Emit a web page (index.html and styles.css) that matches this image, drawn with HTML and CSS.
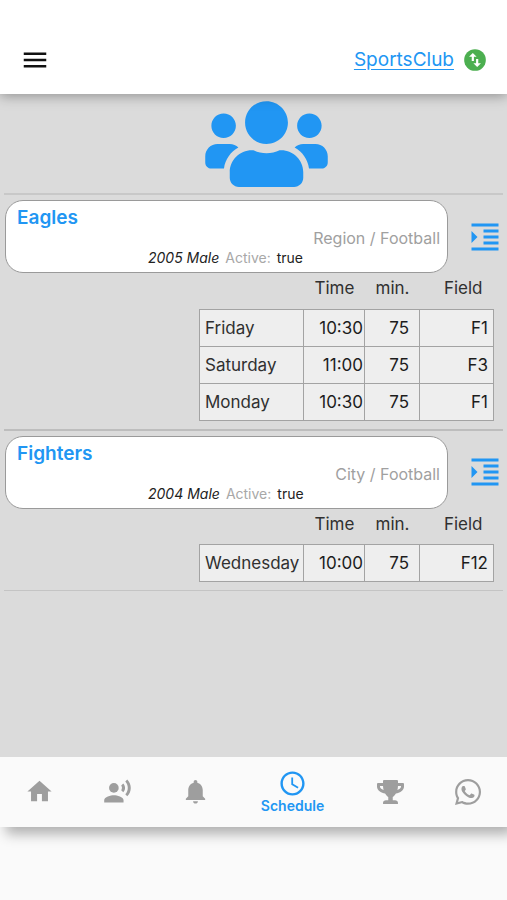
FILE: index.html
```html
<!DOCTYPE html>
<html lang="en">
<head>
<meta charset="utf-8">
<meta name="viewport" content="width=device-width, initial-scale=1">
<title>SportsClub</title>
<link rel="stylesheet" href="styles.css">
</head>
<body>
<div class="app">
  <header class="topbar">
    <button class="icon-button" type="button" aria-label="Menu">
      <svg class="icon-menu" viewBox="0 0 24 24"><path d="M3 18h18v-2H3v2zm0-5h18v-2H3v2zm0-7v2h18V6H3z"/></svg>
    </button>
    <div class="club">
      <a class="club-link" href="#">SportsClub</a>
      <button class="icon-button" type="button" aria-label="Switch club">
        <svg class="icon-swap" viewBox="0 0 24 24"><circle cx="12" cy="12" r="10"/><path d="M6.500 9L10 5.500 13.500 9H11v4H9V9zm11 6L14 18.500 10.500 15H13v-4h2v4z"/></svg>
      </button>
    </div>
  </header>

  <main class="content">
    <div class="hero">
      <svg class="icon-users" viewBox="0 0 640 512" aria-hidden="true"><path d="M96 224c35.300 0 64-28.700 64-64s-28.700-64-64-64-64 28.700-64 64 28.700 64 64 64zm448 0c35.300 0 64-28.700 64-64s-28.700-64-64-64-64 28.700-64 64 28.700 64 64 64zm32 32h-64c-17.600 0-33.500 7.100-45.100 18.600 40.300 22.100 68.900 62 75.100 109.400h66c17.700 0 32-14.300 32-32v-32c0-35.300-28.700-64-64-64zm-256 0c61.900 0 112-50.100 112-112S381.900 32 320 32 208 82.100 208 144s50.100 112 112 112zm76.800 32h-8.300c-20.800 10-43.900 16-68.500 16s-47.600-6-68.500-16h-8.300C179.600 288 128 339.600 128 403.200V432c0 26.500 21.500 48 48 48h288c26.500 0 48-21.500 48-48v-28.800c0-63.600-51.600-115.200-115.200-115.200zm-223.700-13.400C161.500 263.100 145.600 256 128 256H64c-35.300 0-64 28.700-64 64v32c0 17.700 14.300 32 32 32h65.900c6.300-47.400 34.900-87.300 75.200-109.400z"/></svg>
    </div>

    <section class="team">
      <div class="team-row">
        <article class="card">
          <h2 class="team-name">Eagles</h2>
          <p class="team-league">Region / Football</p>
          <p class="team-info"><em>2005 Male</em> <span class="muted">Active:</span> <span>true</span></p>
        </article>
        <button class="icon-button" type="button" aria-label="Toggle Eagles schedule">
          <svg class="icon-indent" viewBox="0 0 24 24"><path d="M3 21h18v-2H3v2zM3 8v8l4-4-4-4zm8 9h10v-2H11v2zM3 3v2h18V3H3zm8 6h10V7H11v2zm0 4h10v-2H11v2z"/></svg>
        </button>
      </div>
      <table class="schedule">
        <thead><tr><td class="day"></td><th class="time">Time</th><th class="min">min.</th><th class="field">Field</th></tr></thead>
        <tbody>
          <tr><td class="day">Friday</td><td class="time">10:30</td><td class="min">75</td><td class="field">F1</td></tr>
          <tr><td class="day">Saturday</td><td class="time">11:00</td><td class="min">75</td><td class="field">F3</td></tr>
          <tr><td class="day">Monday</td><td class="time">10:30</td><td class="min">75</td><td class="field">F1</td></tr>
        </tbody>
      </table>
    </section>

    <section class="team">
      <div class="team-row">
        <article class="card">
          <h2 class="team-name">Fighters</h2>
          <p class="team-league">City / Football</p>
          <p class="team-info"><em>2004 Male</em> <span class="muted">Active:</span> <span>true</span></p>
        </article>
        <button class="icon-button" type="button" aria-label="Toggle Fighters schedule">
          <svg class="icon-indent" viewBox="0 0 24 24"><path d="M3 21h18v-2H3v2zM3 8v8l4-4-4-4zm8 9h10v-2H11v2zM3 3v2h18V3H3zm8 6h10V7H11v2zm0 4h10v-2H11v2z"/></svg>
        </button>
      </div>
      <table class="schedule">
        <thead><tr><td class="day"></td><th class="time">Time</th><th class="min">min.</th><th class="field">Field</th></tr></thead>
        <tbody>
          <tr><td class="day">Wednesday</td><td class="time">10:00</td><td class="min">75</td><td class="field">F12</td></tr>
        </tbody>
      </table>
    </section>
  </main>

  <nav class="tabs">
    <a class="tab" href="#" aria-label="Home"><svg viewBox="0 0 24 24"><path d="M10 20v-6h4v6h5v-8h3L12 3 2 12h3v8z"/></svg></a>
    <a class="tab" href="#" aria-label="News"><svg viewBox="0 0 24 24"><circle cx="9" cy="9" r="4"/><path d="M9 15c-2.670 0-8 1.340-8 4v2h16v-2c0-2.660-5.330-4-8-4zm7.760-9.640l-1.680 1.690c.84 1.180.84 2.710 0 3.890l1.680 1.690c2.020-2.020 2.020-5.070 0-7.270zM20.070 2l-1.630 1.630c2.770 3.020 2.770 7.560 0 10.740L20.070 16c3.900-3.890 3.910-9.950 0-14z"/></svg></a>
    <a class="tab" href="#" aria-label="Notifications"><svg viewBox="0 0 24 24"><path d="M12 22c1.100 0 2-.9 2-2h-4c0 1.100.89 2 2 2zm6-6v-5c0-3.070-1.640-5.640-4.500-6.320V4c0-.83-.67-1.500-1.500-1.500s-1.500.67-1.500 1.500v.68C7.630 5.360 6 7.920 6 11v5l-2 2v1h16v-1l-2-2z"/></svg></a>
    <a class="tab tab-active" href="#" aria-current="page"><svg viewBox="0 0 24 24"><path d="M11.990 2C6.470 2 2 6.480 2 12s4.470 10 9.990 10C17.520 22 22 17.520 22 12S17.520 2 11.990 2zM12 20c-4.420 0-8-3.580-8-8s3.580-8 8-8 8 3.580 8 8-3.580 8-8 8zm.5-13H11v6l5.250 3.150.75-1.230-4.500-2.670z"/></svg><span>Schedule</span></a>
    <a class="tab" href="#" aria-label="Trophies"><svg class="icon-trophy" viewBox="0 0 576 512"><path d="M552 64H448V24c0-13.300-10.700-24-24-24H152c-13.300 0-24 10.700-24 24v40H24C10.700 64 0 74.700 0 88v56c0 35.700 22.500 72.400 61.900 100.700 31.500 22.700 69.800 37.100 110 41.700C203.300 338.500 240 360 240 360v72h-48c-35.300 0-64 20.700-64 56v12c0 6.600 5.400 12 12 12h296c6.600 0 12-5.400 12-12v-12c0-35.300-28.700-56-64-56h-48v-72s36.700-21.500 68.100-73.600c40.300-4.600 78.600-19 110-41.700 39.300-28.300 61.900-65 61.900-100.700V88c0-13.300-10.700-24-24-24zM99.300 192.800C74.900 175.200 64 155.600 64 144v-16h64.200c1 32.600 5.800 61.200 12.800 86.200-15.100-5.200-29.200-12.400-41.700-21.400zM512 144c0 16.100-17.700 36.100-35.300 48.800-12.500 9-26.700 16.200-41.800 21.400 7-25 11.800-53.600 12.800-86.200H512v16z"/></svg></a>
    <a class="tab" href="#" aria-label="WhatsApp"><svg class="icon-chat" viewBox="0 0 448 512"><path d="M380.900 97.100C339 55.100 283.200 32 223.900 32c-122.400 0-222 99.600-222 222 0 39.100 10.200 77.300 29.600 111L0 480l117.700-30.900c32.400 17.700 68.900 27 106.100 27h.1c122.300 0 224.100-99.600 224.100-222 0-59.300-25.200-115-67.100-157zm-157 341.600c-33.200 0-65.700-8.900-94-25.700l-6.700-4-69.800 18.300L72 359.200l-4.400-7c-18.500-29.400-28.200-63.300-28.200-98.200 0-101.700 82.800-184.500 184.600-184.500 49.300 0 95.600 19.200 130.400 54.100 34.800 34.900 56.200 81.200 56.100 130.500 0 101.800-84.900 184.600-186.600 184.600zm101.200-138.200c-5.500-2.800-32.800-16.200-37.900-18-5.100-1.900-8.800-2.800-12.500 2.800-3.700 5.600-14.300 18-17.600 21.800-3.200 3.700-6.500 4.200-12 1.400-32.600-16.300-54-29.100-75.500-66-5.700-9.800 5.700-9.100 16.300-30.300 1.800-3.700.9-6.900-.5-9.700-1.400-2.800-12.500-30.100-17.100-41.200-4.500-10.800-9.100-9.300-12.500-9.500-3.200-.2-6.900-.2-10.600-.2-3.700 0-9.700 1.400-14.800 6.900-5.100 5.600-19.400 19-19.400 46.300 0 27.300 19.900 53.700 22.600 57.400 2.800 3.700 39.100 59.700 94.800 83.800 35.200 15.200 49 16.500 66.600 13.900 10.700-1.600 32.800-13.400 37.400-26.400 4.600-13 4.600-24.100 3.200-26.400-1.300-2.500-5-3.900-10.500-6.600z"/></svg></a>
  </nav>
</div>
</body>
</html>
```
FILE: styles.css
```css
* {
  box-sizing: border-box;
}

body {
  margin: 0;
  min-height: 100vh;
  display: flex;
  flex-direction: column;
  padding-bottom: 73px;
  background: #fafafa;
  color: #303030;
  font-family: Inter, "Liberation Sans", sans-serif;
  font-size: 17px;
  line-height: 20px;
  overflow-x: hidden;
}

h2,
p {
  margin: 0;
}

svg {
  display: block;
  fill: currentColor;
}

.app {
  flex: 1;
  display: flex;
  flex-direction: column;
  box-shadow: 6px 7px 12px rgba(0, 0, 0, 0.3);
}

.icon-button {
  padding: 0;
  border: 0;
  background: none;
  color: #2196f3;
  cursor: pointer;
}

/* Top bar */
.topbar {
  position: relative;
  display: flex;
  align-items: center;
  justify-content: space-between;
  padding: 44px 19px 18px 20px;
  background: #fff;
  box-shadow: 0 2px 12px rgba(0, 0, 0, 0.34);
}

.icon-menu {
  width: 30px;
  height: 32px;
  color: #111;
}

.club {
  display: flex;
  align-items: center;
  gap: 8px;
}

.club-link {
  color: #2196f3;
  font-size: 19px;
  text-underline-offset: 3px;
}

.icon-swap {
  width: 26px;
  height: 26px;
  color: #4caf50;
}

.icon-swap path {
  fill: #fff;
}

/* Team list */
.content {
  flex: 1;
  background: #dbdbdb;
}

.hero {
  display: flex;
  justify-content: center;
  margin: 0 4px;
  padding: 1px 0 0 25px;
  border-bottom: 2px solid #c8c8c8;
}

.icon-users {
  width: 123px;
  height: 98px;
  color: #2196f3;
}

.team {
  margin: 0 4px;
  padding: 5px 0 8px 1px;
  border-bottom: 2px solid #bdbdbd;
}

.team:last-child {
  border-bottom: 1px solid #c4c4c4;
}

.team-row {
  display: flex;
  align-items: center;
  gap: 19px;
}

.card {
  flex: 1;
  padding: 7px 7px 5px 11px;
  border: 1px solid #9a9a9a;
  border-radius: 18px;
  background: #fff;
}

.team-name {
  color: #2196f3;
  font-size: 19px;
  font-weight: 600;
  line-height: 20px;
}

.team-league {
  color: #a0a0a0;
  font-size: 16px;
  line-height: 20px;
  text-align: right;
}

.team-info {
  display: flex;
  gap: 6px;
  padding-left: 131px;
  color: #222;
  font-size: 14px;
  line-height: 19px;
}

.muted {
  color: #a8a8a8;
}

.icon-indent {
  width: 36px;
  height: 36px;
}

/* Schedule table */
.schedule {
  width: 294px;
  margin: 0 9px 0 auto;
  border-collapse: collapse;
  table-layout: fixed;
}

.schedule th {
  height: 36px;
  padding: 0 11px 5px;
  font-weight: 400;
  text-align: left;
}

.schedule tbody td {
  height: 37px;
  padding: 0 5px;
  border: 1px solid #a3a3a3;
  background: #eee;
}

.schedule .day {
  width: 104px;
  padding-right: 0;
}

.schedule .time {
  width: 61px;
}

.schedule .min {
  width: 55px;
}

.schedule .field {
  width: 74px;
}

.schedule th.field {
  text-align: right;
}

.schedule tbody .time,
.schedule tbody .min,
.schedule tbody .field {
  color: #1c1c1c;
  text-align: right;
}

.schedule tbody .time {
  padding: 0 1px;
}

.schedule tbody .min {
  padding: 0 10px;
}

/* Bottom navigation */
.tabs {
  display: flex;
  height: 70px;
  padding-bottom: 1px;
  background: #fafafa;
}

.tab {
  flex: 2;
  display: flex;
  flex-direction: column;
  align-items: center;
  justify-content: center;
  color: #9e9e9e;
  text-decoration: none;
}

.tab svg {
  width: 29px;
  height: 29px;
}

.tab-active {
  flex: 3;
  color: #2196f3;
  font-size: 14px;
  font-weight: 600;
  line-height: 16px;
}

.tab .icon-trophy {
  width: 27px;
  height: 24px;
}

.tab .icon-chat {
  width: 26px;
  height: 30px;
}
```
